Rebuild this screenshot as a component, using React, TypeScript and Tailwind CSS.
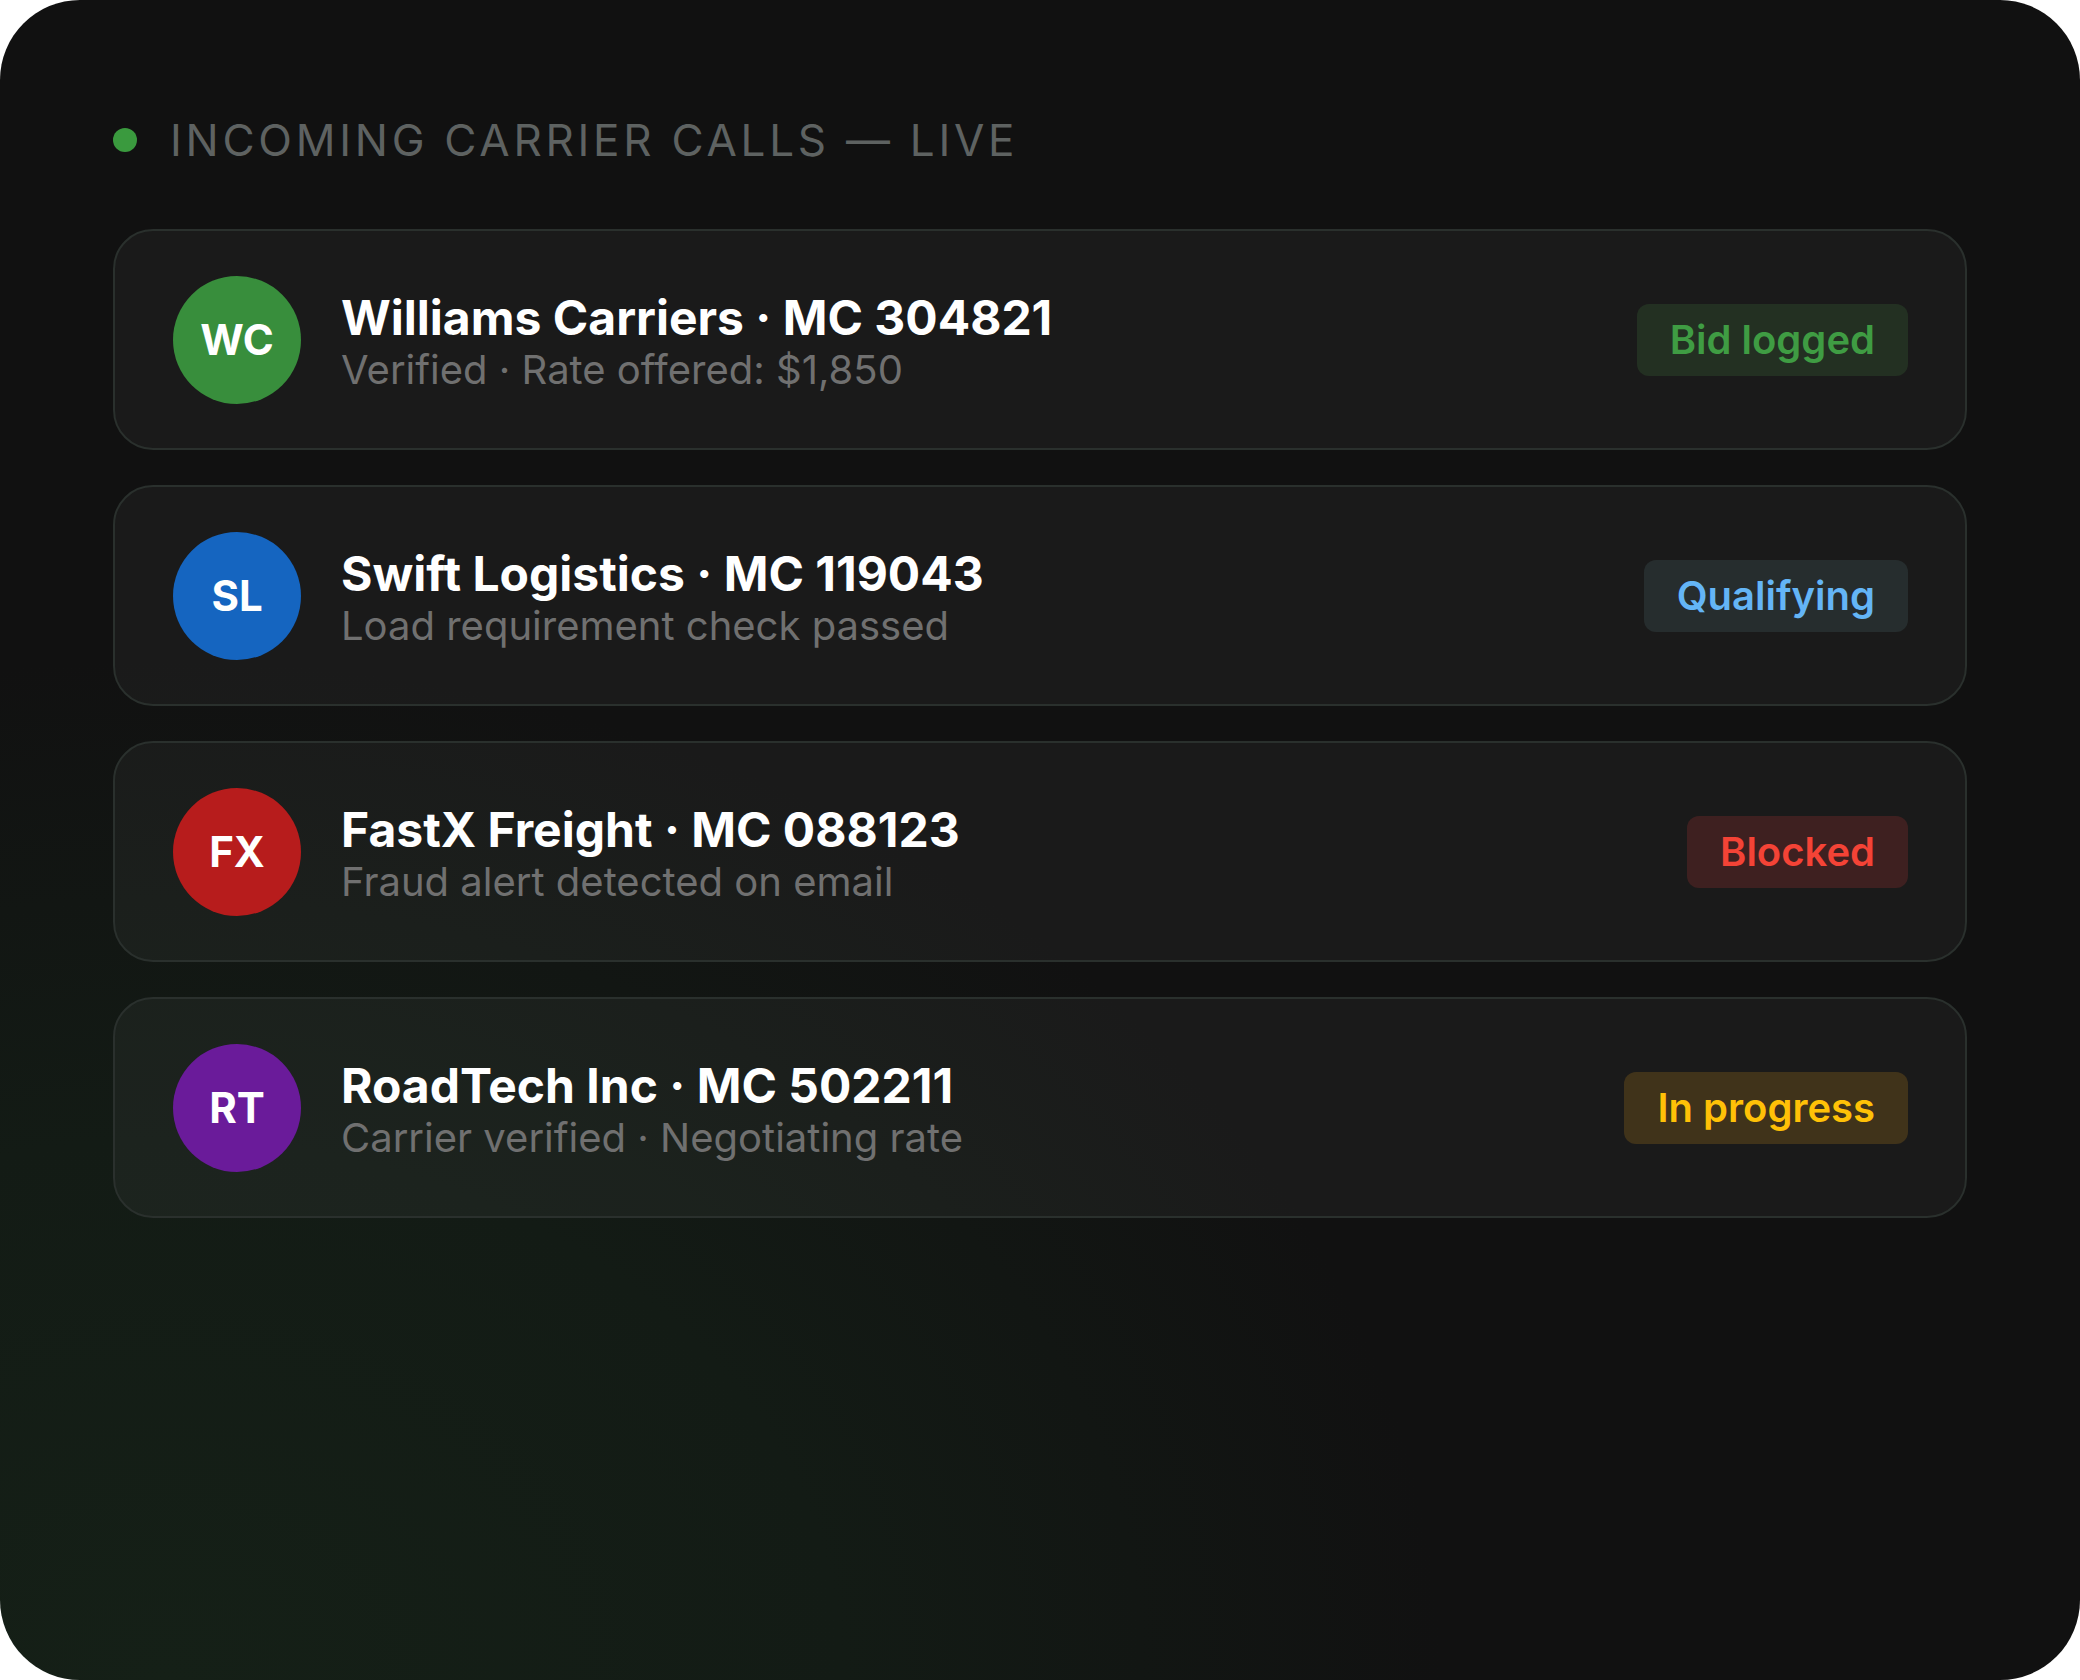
import React from "react";

type Row = {
  initials: string;
  avatar: string;
  title: string;
  sub: string;
  badge: string;
  badgeClass: string;
};

const rows: Row[] = [
  {
    initials: "WC",
    avatar: "bg-[#388e3c]",
    title: "Williams Carriers · MC 304821",
    sub: "Verified · Rate offered: $1,850",
    badge: "Bid logged",
    badgeClass: "bg-[#233022] text-[#3f9c43]",
  },
  {
    initials: "SL",
    avatar: "bg-[#1565c0]",
    title: "Swift Logistics · MC 119043",
    sub: "Load requirement check passed",
    badge: "Qualifying",
    badgeClass: "bg-[#262d2e] text-[#64b5f6]",
  },
  {
    initials: "FX",
    avatar: "bg-[#b71c1c]",
    title: "FastX Freight · MC 088123",
    sub: "Fraud alert detected on email",
    badge: "Blocked",
    badgeClass: "bg-[#3e2020] text-[#f44336]",
  },
  {
    initials: "RT",
    avatar: "bg-[#6a1b9a]",
    title: "RoadTech Inc · MC 502211",
    sub: "Carrier verified · Negotiating rate",
    badge: "In progress",
    badgeClass: "bg-[#40331a] text-[#ffc107]",
  },
];

export default function App() {
  return (
    <div
      className="w-[2080px] h-[1680px] rounded-[80px] overflow-hidden bg-[#111111] bg-[radial-gradient(ellipse_1500px_1200px_at_8%_100%,#152017_0%,#131b15_45%,#111111_85%)] px-[113px] pt-[118px]"
      style={{ fontFamily: "Inter, 'Noto Sans', sans-serif" }}
    >
      <div className="flex items-center gap-[33px]">
        <div className="w-[24px] h-[24px] rounded-full bg-[#3a9a3e]" />
        <div className="text-[44px] leading-[44px] tracking-[0.085em] text-[#5e6261] font-normal">
          INCOMING CARRIER CALLS — LIVE
        </div>
      </div>

      <div className="mt-[67px] flex flex-col gap-[35px]">
        {rows.map((r) => (
          <div
            key={r.initials}
            className="h-[221px] rounded-[40px] border-2 border-[#2a302d] bg-white/[0.04] flex items-center pl-[58px] pr-[57px]"
          >
            <div
              className={`w-[128px] h-[128px] rounded-full ${r.avatar} flex items-center justify-center text-white text-[42px] font-bold leading-none`}
            >
              {r.initials}
            </div>
            <div className="ml-[40px] flex flex-col flex-1 mt-[4px]">
              <div className="text-[48px] leading-[56px] font-bold text-white">
                {r.title}
              </div>
              <div className="text-[40px] leading-[48px] text-[#707070]">
                {r.sub}
              </div>
            </div>
            <div
              className={`h-[72px] rounded-[12px] px-[33px] flex items-center text-[40px] font-semibold leading-none ${r.badgeClass}`}
            >
              {r.badge}
            </div>
          </div>
        ))}
      </div>
    </div>
  );
}
